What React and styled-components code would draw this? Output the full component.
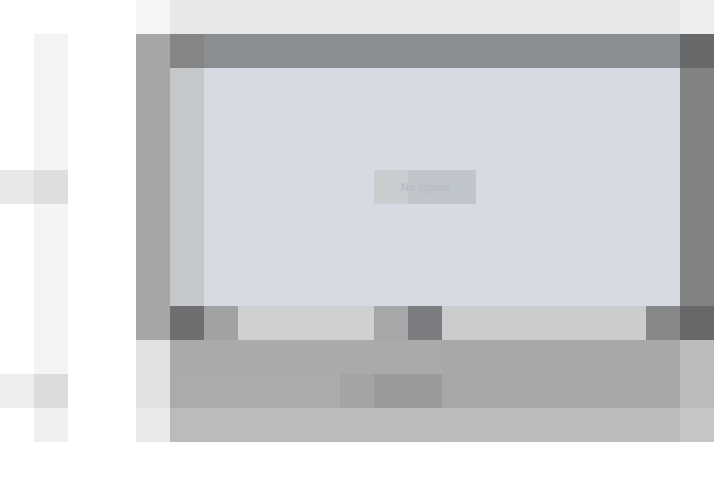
import React from 'react';
import styled, { createGlobalStyle } from 'styled-components';

const Global = createGlobalStyle`
  body {
    margin: 0;
    background: #ffffff;
    font-family: 'Liberation Sans', Arial, sans-serif;
  }
`;

const CELL = 34;

const Page = styled.div`
  display: flex;
  width: ${CELL * 21}px;
  height: ${CELL * 13}px;
`;

// left column with the clip bin
const Sidebar = styled.nav`
  display: grid;
  grid-template-columns: ${CELL}px ${CELL}px ${CELL * 2}px;
  grid-template-rows: repeat(13, ${CELL}px);
  width: ${CELL * 4}px;
`;
const Rail = styled.div`
  grid-column: 2;
  grid-row: 2 / 14;
  background: linear-gradient(#f4f4f4 0, #f4f4f4 ${CELL * 10}px, #efefef ${CELL * 10}px);
`;
const NavItem = styled.div`
  grid-column: 1 / 3;
  grid-row: ${props => props.row};
  display: flex;
  justify-content: flex-end;
  background: ${props => props.tone};
`;
const NavBadge = styled.span`
  width: ${CELL}px;
  background: ${props => props.tone};
`;

const Main = styled.main`
  display: flex;
  flex-direction: column;
  width: ${CELL * 17}px;
`;

const TopBar = styled.header`
  display: flex;
  height: ${CELL}px;
  background: #e8e8e8;
`;
const TopCap = styled.div`
  width: ${CELL}px;
  background: ${props => props.tone};
`;
const TopFill = styled.div`
  flex: 1;
`;

const Viewer = styled.section`
  display: flex;
  height: ${CELL * 9}px;
`;
const Gutter = styled.div`
  width: ${CELL}px;
  background: ${props => props.tone};
`;
const Frame = styled.div`
  display: grid;
  grid-template-columns: ${CELL}px ${CELL * 14}px ${CELL}px;
  grid-template-rows: ${CELL}px ${CELL * 7}px ${CELL}px;
`;
const FrameCell = styled.div`
  background: ${props => props.tone};
`;
const Canvas = styled.div`
  display: flex;
  align-items: center;
  justify-content: center;
  padding-right: ${CELL}px;
  background: #d6dbe3;
`;
const SignalLabel = styled.span`
  display: flex;
  align-items: center;
  justify-content: center;
  width: ${CELL * 3}px;
  height: ${CELL}px;
  background: linear-gradient(90deg, #c8cdd0 0, #c8cdd0 ${CELL}px, #c0c5cb ${CELL}px);
  color: #b4b9bf;
  font-size: 11px;
  letter-spacing: 0.3px;
`;

const ControlBar = styled.div`
  grid-column: 1 / -1;
  display: flex;
`;
const Control = styled.button`
  width: ${props => props.span * CELL}px;
  height: ${CELL}px;
  padding: 0;
  border: 0;
  background: ${props => props.tone};
`;

const Timeline = styled.section`
  display: flex;
  height: ${CELL * 3}px;
`;
const TimelineGutter = styled.div`
  display: flex;
  flex-direction: column;
  width: ${CELL}px;
  background: #e1e1e1;
  &::after {
    content: '';
    height: ${CELL}px;
    margin-top: auto;
    background: #e9e9e9;
  }
`;
const Tracks = styled.div`
  display: flex;
  flex-direction: column;
  width: ${CELL * 16}px;
`;
const Track = styled.div`
  display: flex;
  height: ${CELL}px;
`;
const Clip = styled.div`
  width: ${props => props.span * CELL}px;
  background: ${props => props.tone};
`;

const controls = [
  [1, '#6f6f71'],
  [1, '#a1a2a4'],
  [4, '#cfd0d0'],
  [1, '#a6a7a9'],
  [1, '#7b7d81'],
  [6, '#cbcccc'],
  [1, '#868889'],
  [1, '#68686a'],
];

const tracks = [
  [[8, '#aaaaaa'], [7, '#a8a8a8'], [1, '#bcbcbc']],
  [[5, '#ababab'], [1, '#a4a4a4'], [2, '#999a9a'], [7, '#a7a7a7'], [1, '#bbbbbb']],
  [[8, '#bbbbbb'], [7, '#bcbcbc'], [1, '#c6c6c6']],
];

export default function App() {
  return (
    <>
      <Global />
      <Page>
        <Sidebar>
          <Rail />
          <NavItem row={6} tone="#e7e7e7">
            <NavBadge tone="#dedede" />
          </NavItem>
          <NavItem row={12} tone="#ededed">
            <NavBadge tone="#dcdcdc" />
          </NavItem>
        </Sidebar>
        <Main>
          <TopBar>
            <TopCap tone="#f5f5f5" />
            <TopFill />
            <TopCap tone="#eeeeee" />
          </TopBar>
          <Viewer>
            <Gutter tone="#a6a6a6" />
            <Frame>
              <FrameCell tone="#858585" />
              <FrameCell tone="#8b8e90" />
              <FrameCell tone="#68696b" />
              <FrameCell tone="#c4c8cb" />
              <Canvas>
                <SignalLabel>No signal</SignalLabel>
              </Canvas>
              <FrameCell tone="#818283" />
              <ControlBar>
                {controls.map(([span, tone], i) => (
                  <Control key={i} span={span} tone={tone} />
                ))}
              </ControlBar>
            </Frame>
          </Viewer>
          <Timeline>
            <TimelineGutter />
            <Tracks>
              {tracks.map((clips, i) => (
                <Track key={i}>
                  {clips.map(([span, tone], j) => (
                    <Clip key={j} span={span} tone={tone} />
                  ))}
                </Track>
              ))}
            </Tracks>
          </Timeline>
        </Main>
      </Page>
    </>
  );
}
